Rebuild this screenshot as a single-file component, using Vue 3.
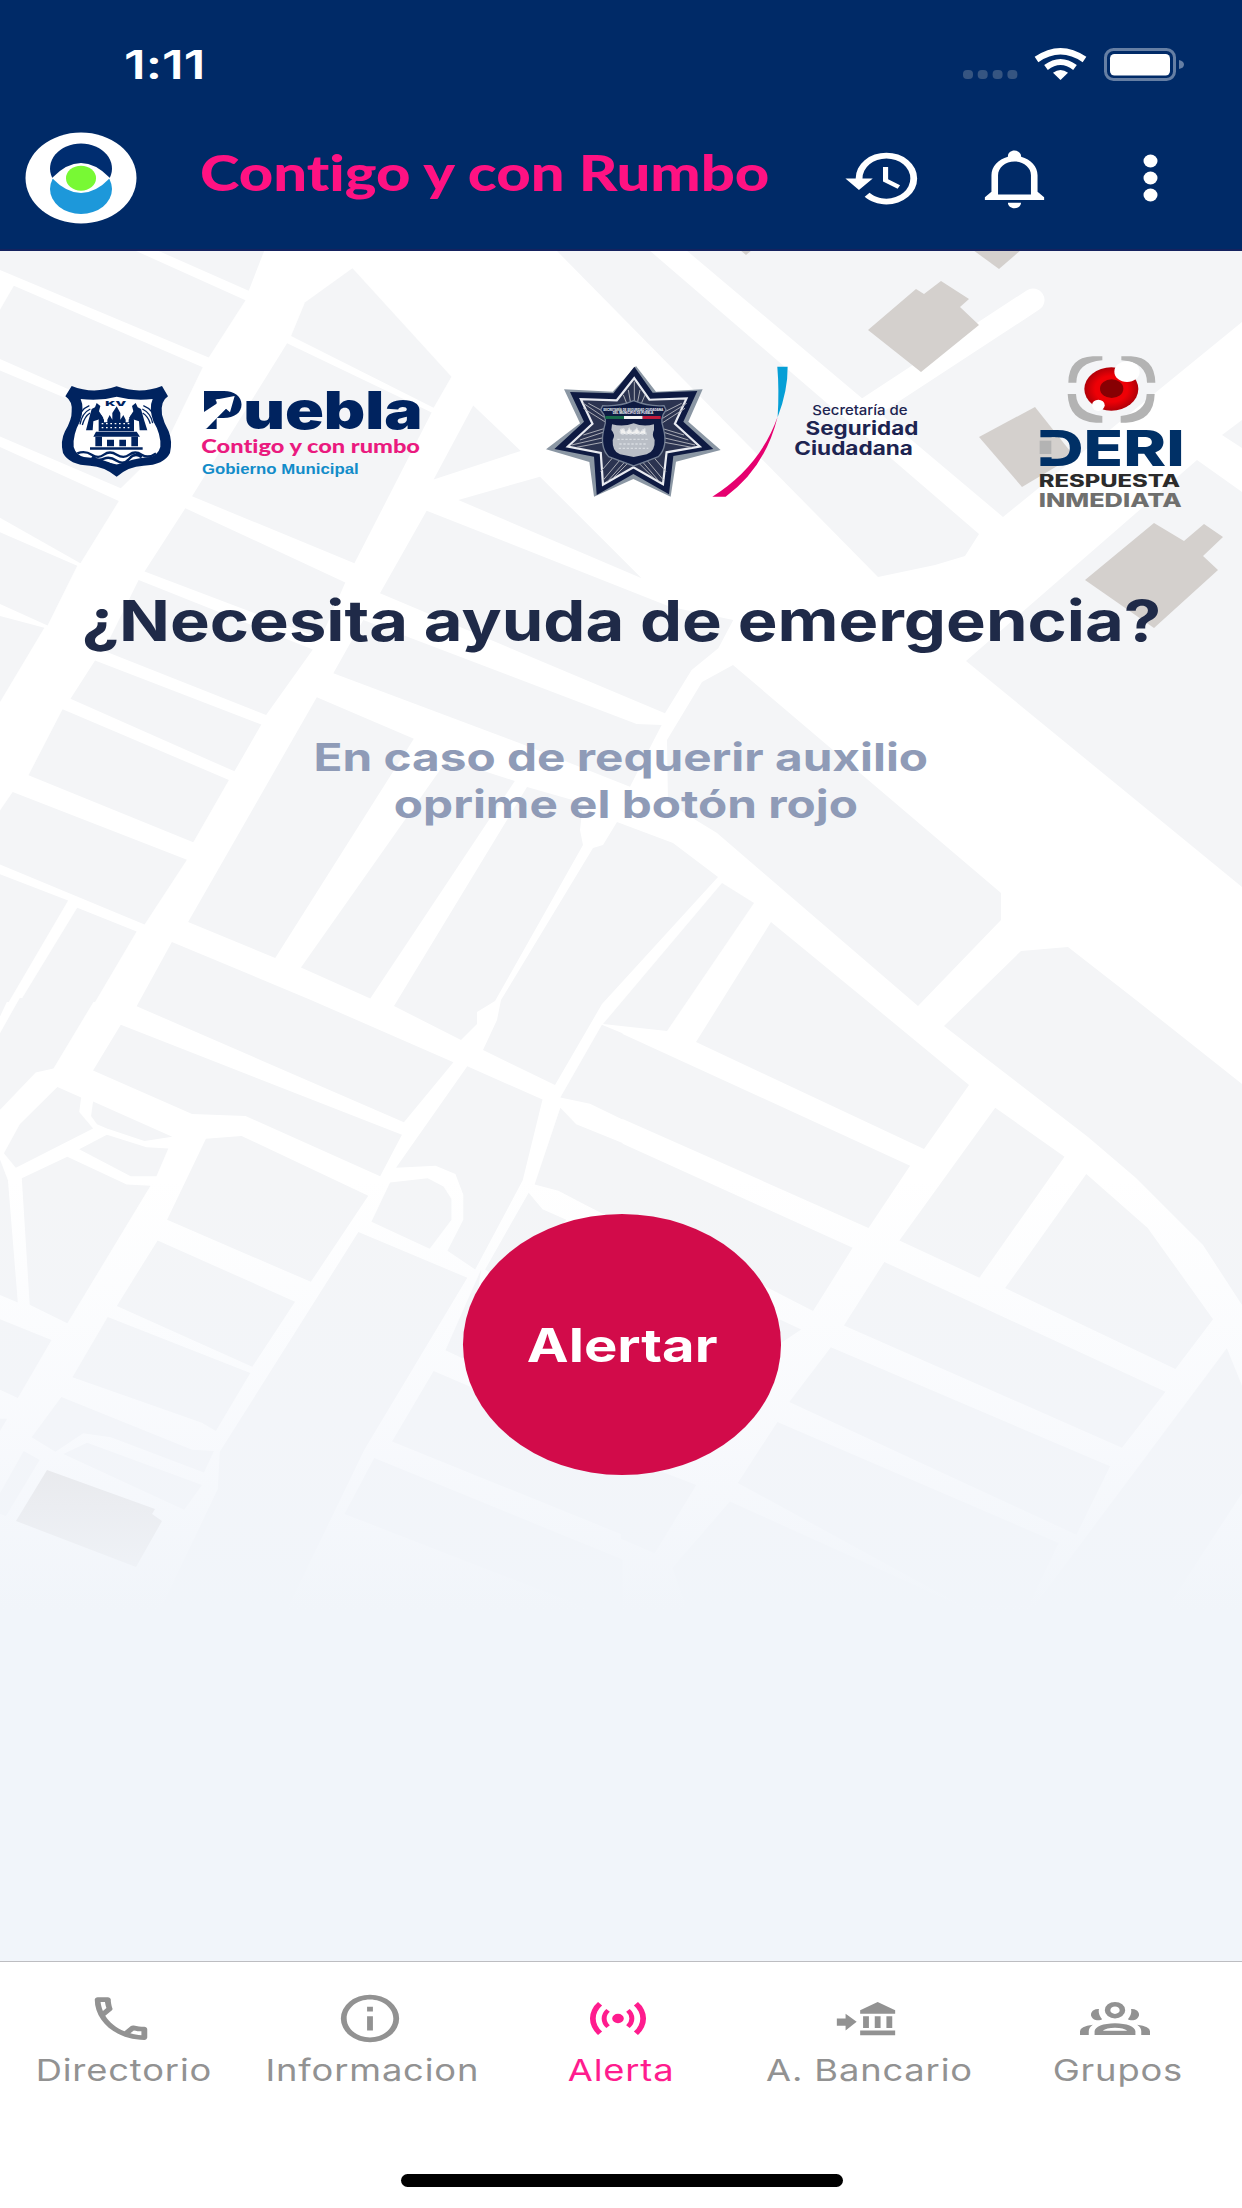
<script setup>
import {ref} from "vue";

const active_tab = ref("alerta")

const tabs = [
  {id: "directorio", label: "Directorio"},
  {id: "informacion", label: "Informacion"},
  {id: "alerta", label: "Alerta"},
  {id: "bancario", label: "A. Bancario"},
  {id: "grupos", label: "Grupos"},
]

// city blocks of the background map, one group per map tile
const map_tiles = [
  {
    transform: "translate(0 250) scale(.396 .4783)",
    blocks: [
      "395,0 668,0 628,85", "0,0 338,0 620,105 527,225 0,42", "35,75 512,245 430,385 0,228 0,125",
      "0,252 425,400 305,498 0,390", "0,412 300,525 203,655 0,560", "0,590 195,660 120,785 0,740",
      "0,765 112,790 0,945", "890,38 1140,265 1095,330 735,180 770,110", "725,195 1090,340 895,655 485,515",
      "468,540 872,695 810,812 365,672", "350,690 790,835 672,972 262,838", "240,858 660,992 592,1090 178,938",
      "158,960 578,1108 488,1238 72,1098", "32,1133 472,1275 365,1410 0,1285 0,1172",
      "0,1305 172,1360 22,1572 0,1572", "195,1375 345,1425 240,1572 50,1572",
      "800,935 1045,1022 695,1480 475,1405", "1130,1065 1300,1110 935,1565 760,1500",
      "1195,325 1315,420 1095,480",
    ],
  },
  {
    transform: "translate(320 420) scale(.3333)",
    blocks: [
      "415,240 660,170 965,475", "320,272 1050,560 1240,600 1195,685 1115,750 1035,880 180,520",
      "130,600 950,912 1025,915 930,1100 600,970 40,760",
    ],
  },
  {
    transform: "",
    blocks: [
      "556,250 649,250 979,534 965,556 935,565 878,577", "686,250 1242,250 1242,322 1003,517",
      "1222,435 1242,420 1242,448", "1197,460 1242,492 1242,887 966,661",
      "733,665 1001,893 1001,920 918,1006 717,833 668,803 667,740 702,682",
      "1021,951 1068,947 1136,1000 1242,1084 1242,1305 1203,1245 1136,1178 1088,1137 944,1026",
      "617,822 673,843 718,877 602,1004 555,1085 483,1050 497,1020 501,1000 593,848 603,845",
      "722,883 754,903 667,1031 603,1024", "771,922 866,1000 969,1085 924,1149 696,1042",
      "527,787 583,803 580,830 583,845 495,1001 477,1012 477,1024 461,1040 394,1006",
    ],
  },
  {
    transform: "translate(0 1000) scale(.396 .4145)",
    blocks: [
      "0,-5 22,-5 0,40", "50,-5 242,-5 135,165 90,175 0,265 0,80", "434,-140 785,0 1145,150 1020,295 345,15",
      "305,60 1015,325 960,425 620,280 485,275 235,170", "145,210 205,235 200,270 235,310 40,405 10,370 50,300",
      "235,245 435,330 365,340 270,310 245,300 230,280", "200,360 270,325 370,355 425,358 395,425 330,425",
      "55,430 170,378 320,445 380,448 170,780 75,735", "0,385 20,435 45,730 0,712", "0,770 130,820 45,960 0,940",
      "520,335 610,328 930,472 785,680 422,530", "398,580 745,728 637,885 295,738",
      "272,765 632,900 545,1040 510,1020 183,910", "155,958 485,1085 540,1088 515,1140 280,1055 210,1045 140,1090 80,1055",
      "160,1095 220,1068 510,1170 465,1230", "0,1010 18,1010 0,1040", "60,1088 100,1110 15,1245 0,1240 0,1190",
      "905,560 1180,670 920,1085 720,1480 400,1480 550,1180 555,1090",
      "985,440 1080,430 1120,450 1140,480 1140,530 1085,600 938,535",
      "1180,160 1370,240 1320,435 1200,650 1130,605 1170,530 1170,470 1150,420 1100,400 1000,405",
      "1415,260 1455,300 1572,345 1572,540 1480,495 1410,460 1350,445", "1335,465 1370,505 1430,530 1300,700 1225,650",
      "1520,60 1572,80 1572,288 1490,250 1415,235", "1215,650 1180,870 1125,845",
      "1095,895 1572,1090 1572,1290 990,1065", "945,1105 1572,1350 1572,1500 870,1240",
    ],
  },
  {
    transform: "translate(621 1000) scale(.396 .4145)",
    blocks: [
      "0,80 730,400 625,550 0,285", "0,345 585,598 485,750 300,660 0,530", "945,260 1120,378 905,670 703,580",
      "1175,420 1330,550 1495,770 1400,890 970,695", "665,632 1375,945 1265,1080 563,785",
      "530,838 1235,1125 1150,1290 425,970", "395,1018 1105,1310 1030,1460 860,1460 295,1165",
      "275,1210 900,1480 170,1480 130,1370", "455,795 400,830 400,770", "1530,840 1568,930 1568,1190 1370,1480 1030,1480",
      "0,1100 190,1170 85,1335 0,1300",
    ],
  },
]

const buildings = [
  "868,330 916,289 924,294 941,281 969,299 960,307 979,325 921,372",
  "979,437 1035,407 1074,456 1022,487",
  "1085,580 1154,523 1184,541 1204,524 1223,537 1203,556 1218,570 1154,628",
  "973,250 1021,250 999,269",
  "740,250 752,250 746,255",
]

const star = "343,80 398,158 532,153 490,245 580,327 460,348 447,463 340,402 230,465 222,350 103,327 192,245 150,156 280,160"
</script>

<template>
  <div class="screen">
    <header>
      <div class="status_bar">
        <span class="clock">1:11</span>
        <svg width="222" height="36" viewBox="0 0 222 36">
          <g fill="#365581">
            <rect x="0" y="23" width="10" height="9" rx="4"/>
            <rect x="14.7" y="23" width="10" height="9" rx="4"/>
            <rect x="29.6" y="23" width="10" height="9" rx="4"/>
            <rect x="44.4" y="23" width="10" height="9" rx="4"/>
          </g>
          <g fill="none" stroke="#fff">
            <path d="M73.5 12.500Q97.500 -4 121.500 12.500" stroke-width="6.500"/>
            <path d="M83 20.500Q97.500 9.500 112 20.500" stroke-width="6"/>
          </g>
          <path d="M97.500 33L90 25.700Q97.500 20.500 105 25.700Z" fill="#fff"/>
          <rect x="142.500" y="2.500" width="69" height="30" rx="8" fill="none" stroke="#667fa4" stroke-width="3"/>
          <rect x="147" y="7" width="60" height="21.500" rx="4.500" fill="#fff"/>
          <path d="M216 13Q221 14 221 17.500T216 22Z" fill="#667fa4"/>
        </svg>
      </div>
      <div class="app_bar">
        <svg class="logo" width="112" height="92" viewBox="0 0 112 92">
          <ellipse cx="56" cy="46" rx="55.500" ry="45.500" fill="#fff"/>
          <ellipse cx="56" cy="57" rx="31" ry="25" fill="#1d98da"/>
          <path d="M27.300 46A31 25 0 1 1 84.700 46Z" fill="#002d70"/>
          <path d="M27 46Q56 16 85 46Q56 76 27 46Z" fill="#fff"/>
          <ellipse cx="56" cy="46.200" rx="15" ry="12.500" fill="#78f934"/>
        </svg>
        <h1 class="app_title"><span>Contigo y con Rumbo</span></h1>
        <svg class="history" width="82" height="69" viewBox="0 0 24 24" preserveAspectRatio="none" fill="#fff">
          <path d="M13.500,8H12V13L16.280,15.540L17,14.330L13.500,12.250V8M13,3A9,9 0 0,0 4,12H1L4.960,16.030L9,12H6A7,7 0 0,1 13,5A7,7 0 0,1 20,12A7,7 0 0,1 13,19C11.070,19 9.320,18.210 8.060,16.940L6.640,18.360C8.270,20 10.500,21 13,21A9,9 0 0,0 22,12A9,9 0 0,0 13,3"/>
        </svg>
        <svg class="bell" width="79" height="66" viewBox="0 0 24 24" preserveAspectRatio="none" fill="#fff">
          <path d="M10 21H14C14 22.100 13.100 23 12 23S10 22.100 10 21M21 19V20H3V19L5 17V11C5 7.900 7.030 5.170 10 4.290V4C10 2.900 10.900 2 12 2S14 2.900 14 4V4.290C16.970 5.170 19 7.900 19 11V17L21 19M17 11C17 8.240 14.760 6 12 6S7 8.240 7 11V18H17V11Z"/>
        </svg>
        <svg class="dots" width="15" height="48" viewBox="0 0 15 48" fill="#fff">
          <ellipse cx="7.500" cy="7" rx="7" ry="6.500"/>
          <ellipse cx="7.500" cy="24" rx="7" ry="6.500"/>
          <ellipse cx="7.500" cy="41" rx="7" ry="6.500"/>
        </svg>
      </div>
    </header>

    <main>
      <svg class="map" viewBox="0 251 1242 1710" width="1242" height="1710">
        <defs>
          <linearGradient id="fade" x1="0" y1="0" x2="0" y2="1">
            <stop offset="0" stop-color="#f1f5fa" stop-opacity="0"/>
            <stop offset=".55" stop-color="#f2f5fb" stop-opacity=".5"/>
            <stop offset="1" stop-color="#f1f5fa"/>
          </linearGradient>
        </defs>
        <g v-for="(tile, i) in map_tiles" :key="i" :transform="tile.transform" fill="#f4f5f7">
          <polygon v-for="block in tile.blocks" :key="block" :points="block"/>
        </g>
        <path d="M1033 300L862 412" stroke="#fff" stroke-width="23" stroke-linecap="round"/>
        <polygon v-for="b in buildings" :key="b" :points="b" fill="#d4d0cd"/>
        <polygon points="47,1470 155,1509 152,1514 162,1521 136,1567 16,1521" fill="#d9d7d7"/>
        <rect x="0" y="1180" width="1242" height="430" fill="url(#fade)"/>
        <rect x="0" y="1609" width="1242" height="360" fill="#f1f5fa"/>
      </svg>

      <div class="logos">
        <!-- Puebla -->
        <svg width="365" height="96.700" viewBox="60 130 1095 290">
          <path d="M95 139Q160 165 230 140Q300 165 366 139L384 170Q360 185 366 225Q372 250 386 275Q398 305 390 340Q372 376 310 378Q265 380 230 411Q192 380 150 378Q88 376 69 340Q60 305 75 275Q96 240 95 215Q98 185 76 170Z" fill="#00235f"/>
          <path d="M122 178Q180 185 230 171Q285 185 338 178Q326 205 340 245Q364 285 361 322Q354 346 330 352Q275 356 230 378Q188 356 132 352Q108 346 101 322Q98 285 120 245Q134 205 122 178Z" fill="#fff"/>
          <g fill="#00235f">
            <path d="M170 190L181 199L177 215L190 235L160 245L158 272H138L146 240L155 208L165 203Z"/>
            <path d="M287 190L276 199L280 215L267 235L297 245L299 272H322L312 240L303 208L293 203Z"/>
            <path d="M176 275V240L184 226L192 240V248H202V240L209 226L217 240V220L230 200L241 220V240L250 226L257 240V248H266V240L273 226L282 240V275Z"/>
            <path d="M168 276H290L300 291H160Z"/>
            <path d="M166 291H186V320H166ZM201 300H222V320H201ZM238 300H258V320H238ZM274 291H294V320H274ZM150 323H308V330H150Z"/>
          </g>
          <g fill="none" stroke="#00235f" stroke-width="4">
            <path d="M148 198Q118 210 112 250M151 208Q126 220 120 254M150 220Q134 230 127 256"/>
            <path d="M310 198Q340 210 347 244M307 208Q332 220 338 250M308 220Q324 230 331 252"/>
            <path d="M185 252H275M185 264H275" stroke="#fff" stroke-dasharray="5 8"/>
          </g>
          <path d="M112 341Q135 332 155 345T192 345T230 345T268 345T305 345T348 341M155 353Q175 365 192 357T230 363T268 357T305 353M200 371L230 378L260 371" fill="none" stroke="#00235f" stroke-width="7"/>
          <text x="196" y="198" textLength="63" lengthAdjust="spacingAndGlyphs" class="inter" font-size="20" font-weight="900" fill="#00235f">KV</text>
          <text x="483" y="267" textLength="665" lengthAdjust="spacingAndGlyphs" class="inter" font-size="156" font-weight="900" fill="#00235f">Puebla</text>
          <path d="M484 222L533 190L526 180L584 169L570 218L558 207L499 267L484 270Z" fill="#fff"/>
          <text x="484" y="339" textLength="656" lengthAdjust="spacingAndGlyphs" class="lato" font-size="59" font-weight="900" fill="#ea1a7f">Contigo y con rumbo</text>
          <text x="486" y="403" textLength="470" lengthAdjust="spacingAndGlyphs" class="arial" font-size="43" font-weight="700" fill="#128cc9">Gobierno Municipal</text>
        </svg>

        <!-- Seguridad Ciudadana -->
        <svg class="seguridad" width="378.300" height="133.300" viewBox="75 75 1135 400">
          <polygon points="348,78 408,155 548,148 505,245 602,330 468,365 452,470 340,417 222,470 208,366 78,328 180,250 132,148 278,155" fill="#8b97a4"/>
          <polygon :points="star" fill="#0e1a42"/>
          <polygon :points="star" fill="#2b3350" stroke="#e9ebf1" stroke-width="8" transform="translate(341 283) scale(.83) translate(-341 -283)"/>
          <g stroke="#a9abb4" stroke-width="3">
            <path d="M343 125V185M325 150L332 190M360 150L352 190M310 165L322 195M375 165L362 195M190 190L265 240M205 190L270 225M190 205L262 250M500 190L420 240M485 190L415 225M495 205L425 250"/>
            <path d="M155 315L255 292M170 322L258 305M180 300L255 275M190 285L255 265M525 315L425 292M515 322L422 305M505 300L425 275M492 285L425 265"/>
            <path d="M250 420L300 360M262 425L315 365M278 415L325 368M242 395L285 345M430 420L380 360M418 425L367 365M402 415L355 368M438 395L395 345"/>
          </g>
          <path d="M248 197Q300 200 341 182Q385 200 432 197L438 210Q418 235 430 265Q445 320 415 350Q385 362 341 378Q298 362 266 350Q238 320 252 265Q264 235 242 210Z" fill="#0e1a42" stroke="#737f94" stroke-width="4"/>
          <path d="M276 253Q310 262 341 250Q370 262 402 253V270Q394 285 404 300Q406 335 380 343L341 351L300 343Q276 335 278 300Q288 285 274 270Z" fill="#b9bec6"/>
          <path d="M300 270L310 265L318 277L328 265L338 277L350 265L360 277L374 265L378 282H302ZM292 298H388M298 312H382M296 325H385" fill="#f1f1f1" stroke="#d9dde2" stroke-width="4" stroke-dasharray="7 5"/>
          <text x="250" y="212" textLength="180" lengthAdjust="spacingAndGlyphs" class="inter" font-size="11" font-weight="800" fill="#e6e8ee">SECRETARÍA DE SEGURIDAD CIUDADANA</text>
          <text x="278" y="223" textLength="122" lengthAdjust="spacingAndGlyphs" class="inter" font-size="10" font-weight="800" fill="#e6e8ee">DEL MUNICIPIO DE PUEBLA</text>
          <rect x="256" y="228" width="56" height="9" fill="#176b4b"/>
          <rect x="312" y="228" width="56" height="9" fill="#f3f3f3"/>
          <rect x="368" y="228" width="54" height="9" fill="#c21b3b"/>
          <path d="M772 80H803Q804 150 773 232Q778 150 772 80Z" fill="#069fd6"/>
          <path d="M773 230Q735 385 617 470H577Q720 380 773 230Z" fill="#e6006f"/>
          <text x="877" y="225" textLength="286" lengthAdjust="spacingAndGlyphs" class="inter" font-size="41" font-weight="500" fill="#1d2451">Secretaría de</text>
          <text x="857" y="285" textLength="338" lengthAdjust="spacingAndGlyphs" class="inter" font-size="56" font-weight="700" fill="#1d2451">Seguridad</text>
          <text x="823" y="346" textLength="356" lengthAdjust="spacingAndGlyphs" class="inter" font-size="56" font-weight="700" fill="#1d2451">Ciudadana</text>
        </svg>

        <!-- DERI -->
        <svg class="deri" width="146.700" height="155" viewBox="236 340 440 465">
          <defs>
            <radialGradient id="eye">
              <stop offset=".6" stop-color="#ee0006"/>
              <stop offset="1" stop-color="#b00008"/>
            </radialGradient>
            <clipPath id="open_stem">
              <path clip-rule="evenodd" d="M230 540H690V700H230ZM230 590H288V650H230Z"/>
            </clipPath>
          </defs>
          <g fill="#b3b3b3">
            <path d="M429 347V359Q352 365 351 426H327Q328 350 400 347ZM486 347V359Q562 365 563 426H588Q586 350 515 347Z"/>
            <path d="M429 546V526Q352 518 350 460H325Q328 542 410 546ZM484 546V526Q560 518 562 460H586Q584 542 500 546Z"/>
            <rect x="241" y="600" width="35" height="40"/>
          </g>
          <ellipse cx="456" cy="445" rx="81" ry="65" fill="url(#eye)"/>
          <ellipse cx="457" cy="444" rx="35" ry="28" fill="#870003"/>
          <ellipse cx="503" cy="393" rx="38" ry="31" fill="#fff"/>
          <ellipse cx="417" cy="494" rx="19" ry="17" fill="#fff"/>
          <g clip-path="url(#open_stem)">
            <text x="232" y="675" textLength="444" lengthAdjust="spacingAndGlyphs" class="inter" font-size="149" font-weight="800" fill="#003066">DERI</text>
          </g>
          <text x="238" y="738" textLength="424" lengthAdjust="spacingAndGlyphs" class="inter" font-size="50" font-weight="800" fill="#2b2b2b">RESPUESTA</text>
          <text x="238" y="800" textLength="429" lengthAdjust="spacingAndGlyphs" class="inter" font-size="57" font-weight="800" fill="#6f6f6e">INMEDIATA</text>
        </svg>
      </div>

      <h2><span>¿Necesita ayuda de emergencia?</span></h2>
      <p>
        <span>En caso de requerir auxilio</span>
        <span class="second_line">oprime el botón rojo</span>
      </p>
      <button class="alert_button"><span>Alertar</span></button>
    </main>

    <nav>
      <div v-for="tab in tabs" :key="tab.id" :class="['tab', {active: tab.id === active_tab}]" @click="active_tab = tab.id">
        <svg width="70" height="57" viewBox="0 0 24 24" preserveAspectRatio="none" fill="currentColor">
          <path v-if="tab.id === 'directorio'" d="M20,15.500C18.800,15.500 17.500,15.300 16.400,14.900C16.300,14.900 16.200,14.900 16.100,14.900C15.800,14.900 15.600,15 15.400,15.200L13.200,17.400C10.400,15.900 8,13.600 6.600,10.800L8.800,8.600C9.100,8.300 9.200,7.900 9,7.600C8.700,6.500 8.500,5.200 8.500,4C8.500,3.500 8,3 7.500,3H4C3.500,3 3,3.500 3,4C3,13.400 10.600,21 20,21C20.500,21 21,20.500 21,20V16.500C21,16 20.500,15.500 20,15.500M5,5H6.500C6.600,5.900 6.800,6.800 7,7.600L5.800,8.800C5.400,7.600 5.100,6.300 5,5M19,19C17.700,18.900 16.400,18.600 15.200,18.200L16.400,17C17.200,17.200 18.100,17.400 19,17.400V19Z"/>
          <path v-else-if="tab.id === 'informacion'" d="M11,9H13V7H11M12,20C7.590,20 4,16.410 4,12C4,7.590 7.590,4 12,4C16.410,4 20,7.590 20,12C20,16.410 16.410,20 12,20M12,2A10,10 0 0,0 2,12A10,10 0 0,0 12,22A10,10 0 0,0 22,12A10,10 0 0,0 12,2M11,17H13V11H11V17Z"/>
          <path v-else-if="tab.id === 'alerta'" d="M12 10A2 2 0 0 0 10 12A2 2 0 0 0 12 14A2 2 0 0 0 14 12A2 2 0 0 0 12 10M5.150 5.100A10 10 0 0 0 5.150 18.900L6.550 17.500A8 8 0 0 1 6.550 6.500L5.150 5.100M18.850 5.100L17.450 6.500A8 8 0 0 1 17.450 17.500L18.850 18.900A10 10 0 0 0 18.850 5.100M8 8A5.800 5.800 0 0 0 8 16L9.200 14.800A4.100 4.100 0 0 1 9.200 9.200L8 8M16 8L14.800 9.200A4.100 4.100 0 0 1 14.800 14.800L16 16A5.800 5.800 0 0 0 16 8"/>
          <path v-else-if="tab.id === 'bancario'" d="M2 12H5V10L8.800 13.400L5 17V15H2V12M16 5L10 8.500V10H22V8.500L16 5M11 11V16H13V11H11M15 11V16H17V11H15M19 11V16H21V11H19M10 17V19H22V17H10Z"/>
          <template v-else>
            <path fill-rule="evenodd" d="M12 5A3.500 3.500 0 1 0 12 12A3.500 3.500 0 1 0 12 5M12 6.900A1.600 1.600 0 1 1 12 10.100A1.600 1.600 0 1 1 12 6.900M5 18.900V17.400C5 15.500 8 14 12 14S19 15.500 19 17.400V18.900H5M7.800 17.200H16.200Q15 15.900 12 15.900T7.800 17.200Z"/>
            <path d="M6.500 8A2.400 2.400 0 1 0 7.600 12.300Q6.100 10.400 6.500 8M17.500 8A2.400 2.400 0 1 1 16.400 12.300Q17.900 10.400 17.500 8M0 18.900V17.400Q0 15.300 4.400 14.600Q3 15.700 3 17.400V18.900H0M24 18.900V17.400Q24 15.300 19.600 14.600Q21 15.700 21 17.400V18.900H24Z"/>
          </template>
        </svg>
        <span class="tab_label">{{ tab.label }}</span>
      </div>
      <div class="home_bar"></div>
    </nav>
  </div>
</template>

<style>
body {
  margin: 0;
}
</style>

<style scoped>
.screen {
  display: flex;
  flex-direction: column;
  width: 1242px;
  height: 2208px;
  overflow: hidden;
  font-family: Inter, "Liberation Sans", sans-serif;
  font-variant-ligatures: none;
  background: #fff;
}

svg {
  display: block;
  flex: none;
  overflow: visible;
}

svg.map {
  overflow: hidden;
}

.inter {
  font-family: Inter, sans-serif;
}

.lato {
  font-family: Lato, sans-serif;
}

.arial {
  font-family: "Liberation Sans", sans-serif;
}

span {
  display: inline-block;
  white-space: nowrap;
}

header {
  box-sizing: border-box;
  height: 251px;
  background: #002a67;
  border-bottom: 2px solid #14225f;
}

.status_bar {
  display: flex;
  justify-content: space-between;
  align-items: center;
  padding: 41px 57px 0 124px;
  height: 48px;
  color: #fff;
}

.clock {
  font-size: 40px;
  font-weight: 600;
  line-height: 46px;
  transform: scaleX(1.28);
  transform-origin: left;
}

.app_bar {
  display: flex;
  align-items: center;
  height: 92px;
  padding: 43px 0 0 25px;
}

.app_title {
  width: 642px;
  margin: 0 0 12px 63px;
  font: 900 49px/60px Lato, sans-serif;
  font-variant-ligatures: none;
  color: #ff1282;
}

.app_title span {
  transform: scaleX(1.22);
  transform-origin: left;
}

.bell {
  margin-left: 51px;
}

.dots {
  margin-left: 89px;
}

main {
  position: relative;
  box-sizing: border-box;
  display: flex;
  flex-direction: column;
  align-items: center;
  height: 1710px;
  padding-top: 103px;
}

.map {
  position: absolute;
  inset: 0;
}

.logos, h2, p, .alert_button {
  position: relative;
}

.logos {
  display: flex;
  align-items: center;
  align-self: flex-start;
  padding-left: 60px;
}

.seguridad {
  margin-left: 120px;
}

.deri {
  margin-left: 115px;
}

h2 {
  margin: 82px 0 0;
  font-size: 56px;
  line-height: 60px;
  font-weight: 700;
  color: #1f2a48;
}

h2 span {
  transform: scaleX(1.193);
}

p {
  display: flex;
  flex-direction: column;
  align-items: center;
  margin: 83px 0 0;
  font-size: 38px;
  line-height: 47px;
  font-weight: 700;
  color: #8f9bb7;
}

p span {
  transform: scaleX(1.255);
}

.second_line {
  margin-left: 10px;
}

.alert_button {
  width: 318px;
  height: 261px;
  margin: 386px 0 0 2px;
  padding: 0;
  border: 0;
  border-radius: 50%;
  background: #d20b4a;
  color: #fff;
  font-family: inherit;
  font-size: 46px;
  font-weight: 700;
}

.alert_button span {
  transform: scaleX(1.22);
}

nav {
  position: relative;
  box-sizing: border-box;
  display: grid;
  grid-template-columns: repeat(5, 1fr);
  align-items: start;
  height: 247px;
  padding-top: 28px;
  border-top: 1px solid #bdbdc1;
  background: #fff;
}

.tab {
  display: flex;
  flex-direction: column;
  align-items: center;
  gap: 5px;
  color: #929292;
}

.tab svg {
  margin-right: 6px;
}

.tab.active {
  color: #ff1c8e;
}

.tab_label {
  font-size: 30px;
  line-height: 37px;
  letter-spacing: 0.7px;
  transform: scaleX(1.21);
}

.home_bar {
  position: absolute;
  left: 401px;
  bottom: 21px;
  width: 442px;
  height: 13px;
  border-radius: 7px;
  background: #000;
}
</style>
